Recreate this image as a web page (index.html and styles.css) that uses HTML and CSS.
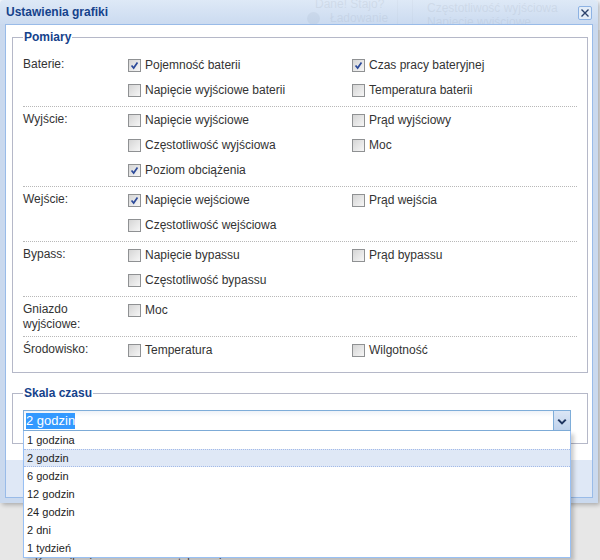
FILE: index.html
```html
<!DOCTYPE html>
<html lang="pl">
<head>
    <meta charset="UTF-8">
    <meta name="viewport" content="width=device-width, initial-scale=1.0">
    <title>Ustawienia grafiki</title>
    <link rel="stylesheet" href="styles.css">
</head>
<body>

<div class="desk">

    <!-- Strona pod oknem -->
    <div class="page">
        <div class="page-bar">
            <div class="status">
                <span class="status-top">Dane! Stajo?</span>
                <span class="status-row"><i class="status-dot"></i>Ładowanie</span>
            </div>
            <div class="bar-sep"></div>
            <div class="bar-sep"></div>
            <div class="series">
                <span>Częstotliwość wyjściowa</span>
                <span>Napięcie wyjściowe</span>
            </div>
        </div>
        <div class="page-fill"></div>
        <div class="page-msg">Komunikacja z serwerem została nawiązana</div>
    </div>

    <!-- Okno ustawień -->
    <div class="win">
        <div class="win-head">
            <span class="win-title">Ustawienia grafiki</span>
            <span class="win-close">
                <svg width="14" height="14" viewBox="0 0 14 14">
                    <rect x="0.5" y="0.5" width="13" height="13" rx="1.5" fill="#e4edf8" stroke="#8db2e3"/>
                    <path d="M3.5 3.5 L10.5 10.5 M10.5 3.5 L3.5 10.5" stroke="#2b416b" stroke-width="1.4" fill="none"/>
                </svg>
            </span>
        </div>

        <div class="win-main">
            <div class="win-frame">
                <div class="win-body">

                    <fieldset class="fs">
                        <legend>Pomiary</legend>

                        <div class="grp">
                            <div class="grp-label">Baterie:</div>
                            <div class="grp-items">
                                <label class="cb"><span class="box"><svg viewBox="0 0 13 13"><path d="M3 6.5 L5.5 9.5 L10 3" /></svg></span>Pojemność baterii</label>
                                <label class="cb"><span class="box"><svg viewBox="0 0 13 13"><path d="M3 6.5 L5.5 9.5 L10 3" /></svg></span>Czas pracy bateryjnej</label>
                                <label class="cb"><span class="box"></span>Napięcie wyjściowe baterii</label>
                                <label class="cb"><span class="box"></span>Temperatura baterii</label>
                            </div>
                        </div>

                        <div class="grp">
                            <div class="grp-label">Wyjście:</div>
                            <div class="grp-items">
                                <label class="cb"><span class="box"></span>Napięcie wyjściowe</label>
                                <label class="cb"><span class="box"></span>Prąd wyjściowy</label>
                                <label class="cb"><span class="box"></span>Częstotliwość wyjściowa</label>
                                <label class="cb"><span class="box"></span>Moc</label>
                                <label class="cb"><span class="box"><svg viewBox="0 0 13 13"><path d="M3 6.5 L5.5 9.5 L10 3" /></svg></span>Poziom obciążenia</label>
                            </div>
                        </div>

                        <div class="grp">
                            <div class="grp-label">Wejście:</div>
                            <div class="grp-items">
                                <label class="cb"><span class="box"><svg viewBox="0 0 13 13"><path d="M3 6.5 L5.5 9.5 L10 3" /></svg></span>Napięcie wejściowe</label>
                                <label class="cb"><span class="box"></span>Prąd wejścia</label>
                                <label class="cb"><span class="box"></span>Częstotliwość wejściowa</label>
                            </div>
                        </div>

                        <div class="grp">
                            <div class="grp-label">Bypass:</div>
                            <div class="grp-items">
                                <label class="cb"><span class="box"></span>Napięcie bypassu</label>
                                <label class="cb"><span class="box"></span>Prąd bypassu</label>
                                <label class="cb"><span class="box"></span>Częstotliwość bypassu</label>
                            </div>
                        </div>

                        <div class="grp">
                            <div class="grp-label">Gniazdo<br>wyjściowe:</div>
                            <div class="grp-items">
                                <label class="cb"><span class="box"></span>Moc</label>
                            </div>
                        </div>

                        <div class="grp grp-last">
                            <div class="grp-label">Środowisko:</div>
                            <div class="grp-items">
                                <label class="cb"><span class="box"></span>Temperatura</label>
                                <label class="cb"><span class="box"></span>Wilgotność</label>
                            </div>
                        </div>
                    </fieldset>

                    <fieldset class="fs fs-time">
                        <legend>Skala czasu</legend>
                        <div class="combo">
                            <div class="combo-input"><span class="combo-sel">2 godzin</span></div>
                            <div class="combo-trigger">
                                <svg width="17" height="21" viewBox="0 0 17 21">
                                    <path d="M4.5 8.5 L8.5 12.5 L12.5 8.5" fill="none" stroke="#1f3560" stroke-width="2.2"/>
                                </svg>
                            </div>
                        </div>
                    </fieldset>

                </div>
                <div class="win-foot"></div>
            </div>
        </div>
    </div>

    <!-- Rozwinięta lista combo -->
    <ul class="combo-list">
        <li>1 godzina</li>
        <li class="active">2 godzin</li>
        <li>6 godzin</li>
        <li>12 godzin</li>
        <li>24 godzin</li>
        <li>2 dni</li>
        <li>1 tydzień</li>
    </ul>

</div>

</body>
</html>
```

FILE: styles.css
```css
/* Ogólne */
body {
    margin: 0;
    font-family: "Liberation Sans", Arial, sans-serif;
    font-size: 12px;
    color: #333;
}

.desk {
    position: relative;
    width: 600px;
    height: 560px;
    overflow: hidden;
}

/* Strona w tle */
.page {
    height: 560px;
    background: #e7e7e7;
    display: flex;
    flex-direction: column;
}

.page-bar {
    height: 30px;
    display: flex;
    padding-left: 307px;
    background: #f2f5fa;
    color: #8c8c8c;
    font-size: 12px;
}

.status {
    width: 90px;
    display: flex;
    flex-direction: column;
}

.status-top {
    margin-top: -3px;
    padding-left: 8px;
    line-height: 14px;
}

.status-row {
    display: flex;
    align-items: center;
    gap: 10px;
    line-height: 14px;
}

.status-dot {
    width: 13px;
    height: 13px;
    border-radius: 50%;
    background: #9aa3ad;
}

.bar-sep {
    width: 14px;
    border-left: 1px solid #c6c6c6;
}

.series {
    display: flex;
    flex-direction: column;
    padding-top: 1px;
    line-height: 14px;
    white-space: nowrap;
}

.page-fill {
    flex: 1;
}

.page-msg {
    height: 11px;
    margin-bottom: -8px;
    padding-left: 35px;
    color: #444;
    font-size: 11px;
    line-height: 11px;
}

/* Okno */
.win {
    position: absolute;
    left: 0;
    top: 0;
    width: 598px;
    box-shadow: 2px 2px 4px rgba(0, 0, 0, 0.25);
    border-radius: 4px 4px 2px 2px;
}

.win-head {
    height: 24px;
    display: flex;
    align-items: center;
    justify-content: space-between;
    padding: 0 6px 0 6px;
    background: linear-gradient(rgba(219, 231, 246, 0.88), rgba(199, 216, 239, 0.9));
    border-radius: 4px 4px 0 0;
}

.win-title {
    font-weight: bold;
    color: #15428b;
    font-size: 12px;
}

.win-close {
    display: flex;
    margin-top: 1px;
}

.win-main {
    background: #cad9ee;
    padding: 0 5px 5px;
}

.win-frame {
    border: 1px solid #99bbe8;
}

.win-body {
    background: #fff;
    padding: 5px 4px 16px 6px;
}

.win-foot {
    height: 37px;
    background: #dfe8f6;
}

/* Fieldset */
.fs {
    margin: 0;
    border: 1px solid #b5b8c8;
    padding: 8px 10px 6px 10px;
}

.fs legend {
    padding: 0 1px;
    font-weight: bold;
    color: #15428b;
    line-height: 14px;
}

.grp {
    display: flex;
    padding-bottom: 4px;
    border-bottom: 1px dotted #b8b8b8;
}

.grp-last {
    border-bottom: none;
}

.grp-label {
    width: 105px;
    padding-top: 5px;
    line-height: 15px;
    color: #333;
}

.grp-items {
    flex: 1;
    display: grid;
    grid-template-columns: 224px 1fr;
    grid-auto-rows: 25px;
}

.cb {
    display: flex;
    align-items: center;
    gap: 4px;
    color: #333;
}

.box {
    width: 11px;
    height: 11px;
    border: 1px solid #8f9193;
    background: linear-gradient(135deg, #d5d5d5, #f6f6f6);
    display: flex;
    margin-top: 1px;
}

.box svg {
    width: 11px;
    height: 11px;
}

.box path {
    fill: none;
    stroke: #2c4a9a;
    stroke-width: 2;
}

/* Skala czasu */
.fs-time {
    margin-top: 13px;
    padding: 10px 10px 12px 10px;
}

.combo {
    display: flex;
    width: 548px;
    height: 21px;
}

.combo-input {
    flex: 1;
    border: 1px solid #7eadd9;
    background: linear-gradient(#eef2f8, #fff 6px);
    display: flex;
    align-items: center;
    padding-left: 2px;
}

.combo-sel {
    background: #3399ff;
    color: #fff;
    font-size: 13px;
    line-height: 16px;
}

.combo-trigger {
    width: 17px;
    height: 21px;
    background: linear-gradient(#dbe6f5, #bfd2ec);
    border: 1px solid #7eadd9;
    border-left: none;
    box-sizing: border-box;
    display: flex;
}

/* Lista rozwijana */
.combo-list {
    position: absolute;
    left: 23px;
    top: 431px;
    width: 548px;
    box-sizing: border-box;
    margin: 0;
    padding: 0;
    list-style: none;
    background: #fff;
    border: 1px solid #98c0f4;
    border-top: none;
    box-shadow: 3px 3px 4px rgba(0, 0, 0, 0.2);
    font-size: 11px;
    color: #222;
}

.combo-list li {
    height: 18px;
    line-height: 18px;
    padding-left: 3px;
    box-sizing: border-box;
}

.combo-list li.active {
    background: #dfe8f6;
    border-top: 1px dotted #a3bae9;
    border-bottom: 1px dotted #a3bae9;
    line-height: 16px;
}
```
